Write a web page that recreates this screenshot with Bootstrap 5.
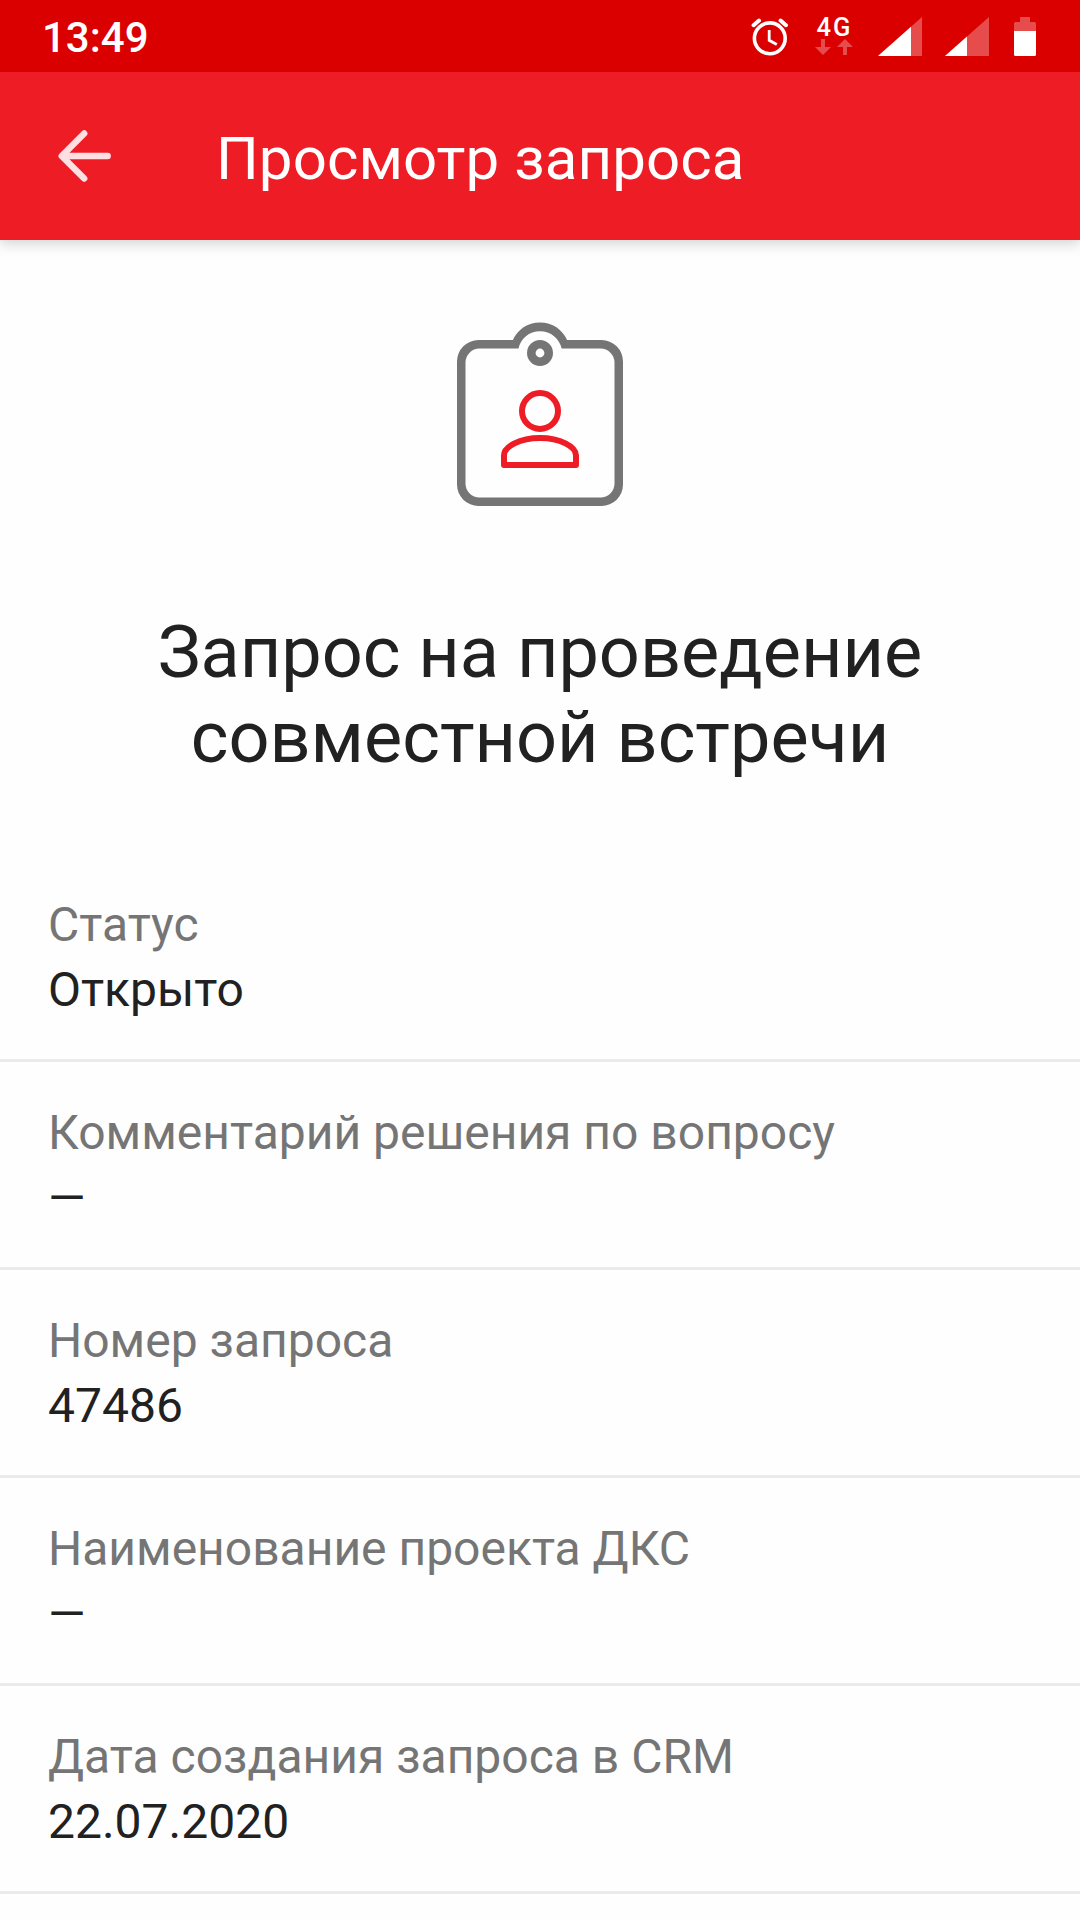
<!DOCTYPE html>
<html lang="ru">
<head>
<meta charset="utf-8">
<meta name="viewport" content="width=device-width, initial-scale=1">
<title>Просмотр запроса</title>
<link href="https://cdn.jsdelivr.net/npm/bootstrap@5.3.0/dist/css/bootstrap.min.css" rel="stylesheet">
<style>
  body { font-family: Roboto, "Noto Sans", sans-serif; color: #212121; background: #fefefe; }
  svg { display: block; flex: none; }
  .screen { height: 1920px; overflow: hidden; }
  .status-bar { height: 72px; background: #db0000; padding: 0 44px 0 42px; z-index: 2; }
  .clock { font-size: 42px; line-height: 50px; font-weight: 500; padding-top: 4px; }
  .net { width: 40px; margin: 0 24px; }
  .net-label { font-size: 25.5px; line-height: 24px; letter-spacing: 2px; font-weight: 500; padding-left: 2.5px; }
  .signal-second { margin-left: 23px; }
  .battery { margin-left: 25px; }
  .app-bar { height: 168px; background: #ee1c25; padding: 0 56px; gap: 104px; box-shadow: 0 4px 12px rgba(0,0,0,.17); z-index: 1; }
  .app-title { font-size: 60px; line-height: 72px; padding-top: 6px; letter-spacing: .07px; }
  .hero { padding: 78px 60px 74px; }
  .hero-title { font-size: 72px; line-height: 85px; font-weight: 400; margin: 100px 0 0; }
  .field { --bs-list-group-bg: transparent; padding: 38px 48px 37px; border-width: 0 0 3px !important; border-color: #eaeaea; font-size: 48px; line-height: 65px; color: #212121; }
  .field dt { font-weight: 400; color: #757575; }
</style>
<script src="https://cdn.jsdelivr.net/npm/bootstrap@5.3.0/dist/js/bootstrap.bundle.min.js"></script>
</head>
<body>
<div class="screen d-flex flex-column">
  <div class="status-bar position-relative d-flex align-items-center justify-content-between text-white">
    <div class="clock">13:49</div>
    <div class="d-flex align-items-start">
      <svg width="40" height="42" viewBox="750 14 40 42" fill="none" stroke="#fff">
        <circle cx="769.8" cy="37.3" r="15.4" stroke-width="3.6"/>
        <path d="M769.2 29v10.3l7.6 4.2" stroke-width="2.8"/>
        <path d="M753.6 24.200l5.400-4.600M786 24.200l-5.400-4.600" stroke-width="4" stroke-linecap="round"/>
      </svg>
      <div class="net d-flex flex-column">
        <div class="net-label">4G</div>
        <svg width="40" height="17" viewBox="814 39 40 17" fill="#e64c4c">
          <path d="M821 39h4v8h6l-8 8-8-8h6zM843 55h4v-8h6l-8-8-8 8h6z"/>
        </svg>
      </div>
      <svg width="44" height="42" viewBox="878 14 44 42">
        <path d="M922 16v39h-44z" fill="#e64c4c"/><path d="M911 25.8v29.2h-33z" fill="#fff"/>
      </svg>
      <svg class="signal-second" width="44" height="42" viewBox="945 14 44 42">
        <path d="M989 16v39h-44z" fill="#e64c4c"/><path d="M967 35.5v19.5h-22z" fill="#fff"/>
      </svg>
      <svg class="battery" width="22" height="42" viewBox="1014 14 22 42">
        <path d="M1020 16h10v5h4.500q1.500 0 1.500 1.500v8h-22v-8q0-1.500 1.500-1.500h4.500z" fill="#e64c4c"/>
        <path d="M1014 30h22v23.500q0 1.500-1.500 1.500h-19q-1.500 0-1.500-1.500z" fill="#fff"/>
      </svg>
    </div>
  </div>

  <header class="app-bar position-relative d-flex align-items-center text-white">
    <svg width="56" height="56" viewBox="56 128 56 56" fill="none" stroke="#ffe0e2" stroke-width="6.400" stroke-linecap="round" stroke-linejoin="round">
      <path d="M107.700 156H62M84.200 133.500L61.700 156l22.500 22.500"/>
    </svg>
    <div class="app-title">Просмотр запроса</div>
  </header>

  <main>
    <section class="hero d-flex flex-column align-items-center text-center">
      <svg width="172" height="192" viewBox="454 318 172 192" fill="none">
        <path d="M518.500 348.600H479.500a14 14 0 0 0-14 14v120.900a14 14 0 0 0 14 14h121a14 14 0 0 0 14-14v-120.900a14 14 0 0 0-14-14H561.700C559.500 338.500 550.800 331.200 540 331.200S520.500 338.500 518.500 348.600zM512.900 340C517.500 329.500 527.500 322.400 540 322.400S562.500 329.500 567.100 340H601.500a21.500 21.500 0 0 1 21.500 21.500v123a21.500 21.500 0 0 1-21.500 21.500h-123a21.500 21.500 0 0 1-21.500-21.500v-123a21.500 21.500 0 0 1 21.500-21.500z" fill="#757575" fill-rule="evenodd"/>
        <circle cx="540" cy="353" r="8.700" stroke="#757575" stroke-width="8.600"/>
        <g stroke="#ee1c25" stroke-width="6" stroke-linejoin="round">
          <circle cx="540" cy="411" r="18"/>
          <path d="M504 465v-9.500C504 446.500 520 438 540 438s36 8.500 36 17.500v9.500z"/>
        </g>
      </svg>
      <h1 class="hero-title">Запрос на проведение<br>совместной встречи</h1>
    </section>

    <dl class="list-group list-group-flush mb-0">
      <div class="list-group-item field"><dt>Статус</dt><dd class="mb-0">Открыто</dd></div>
      <div class="list-group-item field"><dt>Комментарий решения по вопросу</dt><dd class="mb-0">—</dd></div>
      <div class="list-group-item field"><dt>Номер запроса</dt><dd class="mb-0">47486</dd></div>
      <div class="list-group-item field"><dt>Наименование проекта ДКС</dt><dd class="mb-0">—</dd></div>
      <div class="list-group-item field"><dt>Дата создания запроса в CRM</dt><dd class="mb-0">22.07.2020</dd></div>
    </dl>
  </main>
</div>
</body>
</html>
